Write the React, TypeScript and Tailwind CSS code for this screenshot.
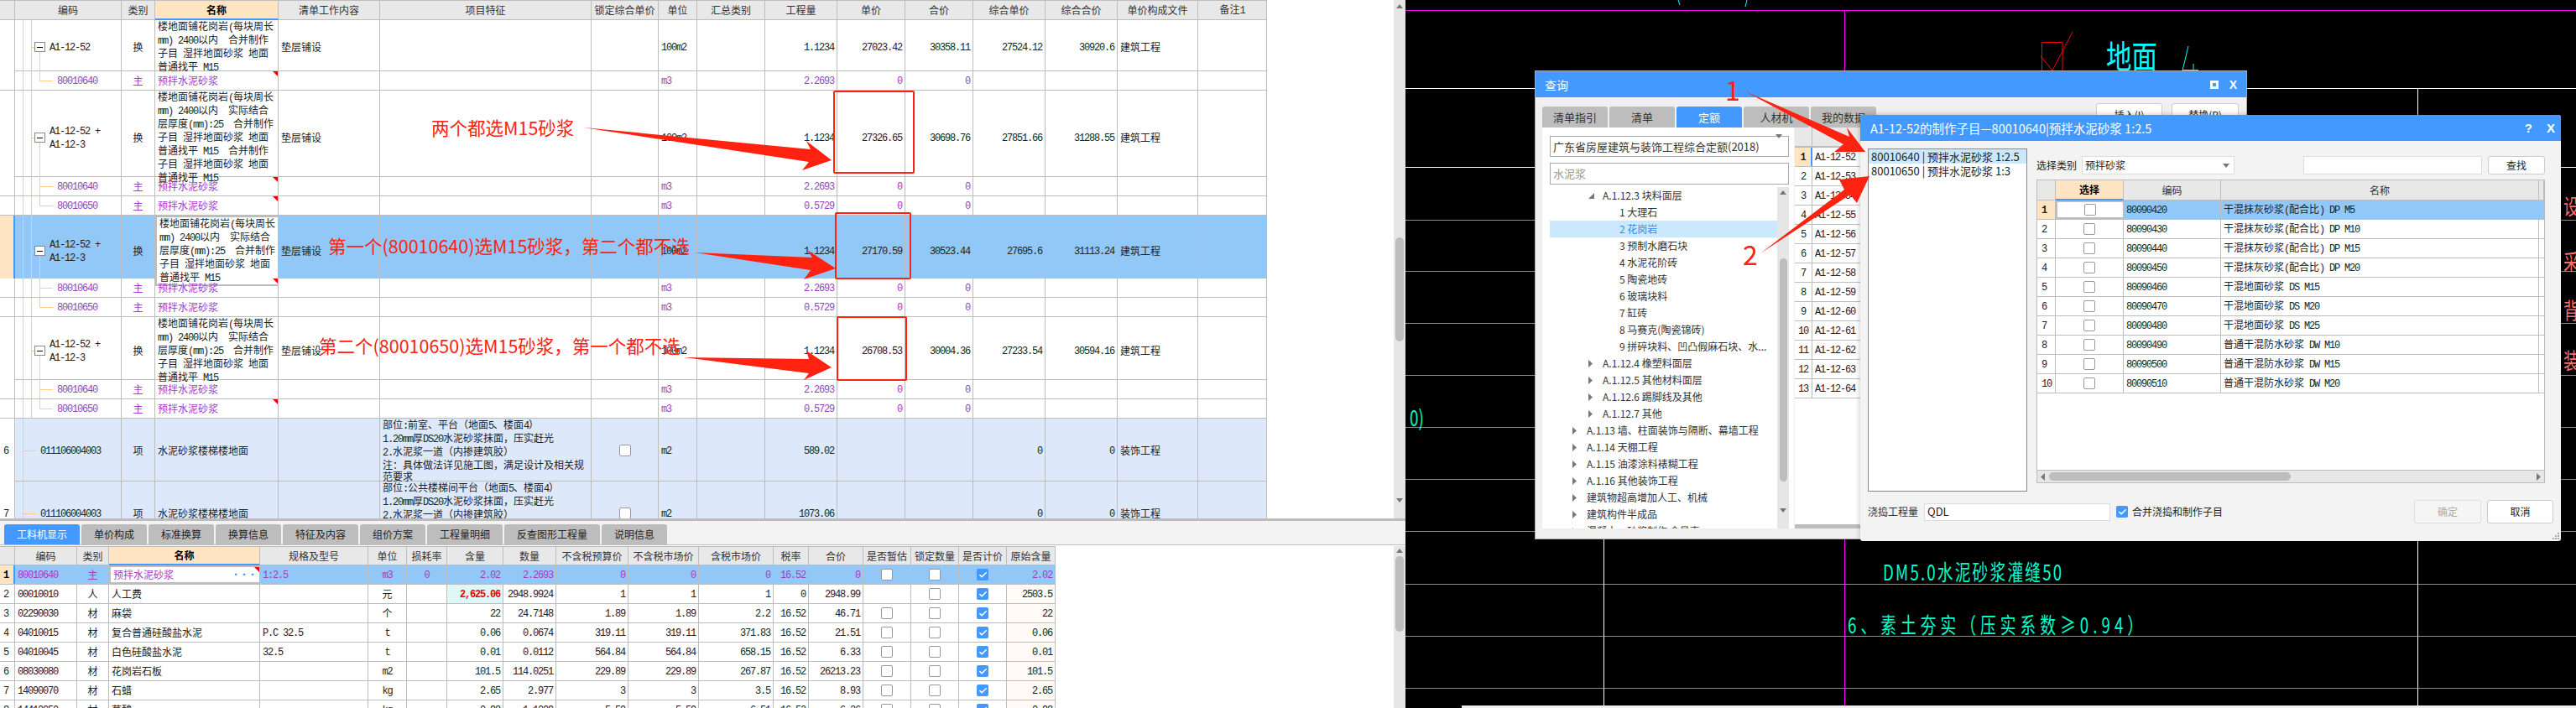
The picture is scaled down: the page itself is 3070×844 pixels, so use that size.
import React from "react";
import clsx from "clsx";
import { Check } from "lucide-react";

const LINE = "border-[#bdbdbd]";
const PURPLE = "text-[#a33cc4]";

// ascii runs get a half-width mono face so they sit like the old bitmap font
const Sim = ({ text }: { text: string }) => (
  <span>
    {text.split(/([\x20-\x7e]+)/).map((p, i) =>
      i % 2 ? (
        <span key={i} className="font-['Liberation_Mono',monospace] tracking-[-1.2px]">
          {p}
        </span>
      ) : (
        p
      )
    )}
  </span>
);

const Box = ({ checked }: { checked?: boolean }) =>
  checked ? (
    <span className="flex items-center justify-center w-[14px] h-[14px] rounded-[2px] bg-[#4499ff]">
      <Check size={11} strokeWidth={3.5} className="text-white" />
    </span>
  ) : (
    <span className="block w-[14px] h-[14px] rounded-[2px] border border-[#999] bg-white" />
  );

const Tri = () => (
  <span className="absolute top-0 right-0 w-0 h-0 border-t-[6px] border-l-[6px] border-t-[#f00000] border-l-transparent" />
);

const Cell = ({ children, className }: { children?: React.ReactNode; className?: string }) => (
  <div className={clsx("relative flex items-center min-w-0 border-r px-[3px]", LINE, className)}>{children}</div>
);

const HeadCell = ({ children, active, tall }: { children?: React.ReactNode; active?: boolean; tall?: boolean }) => (
  <div
    className={clsx(
      "flex items-center justify-center border-r",
      LINE,
      active ? "bg-[#ffe4c4] font-bold text-black border-b-2 border-b-[#4499ff]" : "bg-[#e8e8e8] text-[#333] border-b",
      tall && "h-full"
    )}
  >
    {children}
  </div>
);

const Up = () => <span className="w-0 h-0 border-x-[4px] border-b-[5px] border-x-transparent border-b-[#777]" />;
const Down = () => <span className="w-0 h-0 border-x-[4px] border-t-[5px] border-x-transparent border-t-[#777]" />;

/* ---------- top grid ---------- */

const TOP_COLS = "grid grid-cols-[18px_127px_40px_147px_121px_252px_80px_46px_81px_86px_81px_81px_86px_86px_96px_82px]";

type TopRow = {
  kind: "item" | "sub" | "section";
  h: string;
  no?: string;
  code: string[];
  name: string[];
  feature?: string[];
  qty: string;
  nums: string[];
  tri?: boolean;
  last?: boolean;
  sel?: boolean;
};

const N4 = ["楼地面铺花岗岩(每块周长", "mm) 2400以内  合并制作", "子目 湿拌地面砂浆 地面", "普通找平 M15"];
const N5 = ["楼地面铺花岗岩(每块周长", "mm) 2400以内  实际结合", "层厚度(mm):25  合并制作", "子目 湿拌地面砂浆 地面", "普通找平 M15"];
const N7 = [...N5, "子目 湿拌地面砂浆 地面", "普通找平 M15"];
N7[4] = "普通找平 M15  合并制作";
const MIX = ["预拌水泥砂浆"];

const topRows: TopRow[] = [
  { kind: "item", h: "h-[61px]", code: ["A1-12-52"], name: N4, qty: "1.1234", nums: ["27023.42", "30358.11", "27524.12", "30920.6"] },
  { kind: "sub", h: "h-[23px]", code: ["80010640"], name: MIX, qty: "2.2693", nums: ["0", "0"], tri: true, last: true },
  { kind: "item", h: "h-[103px]", code: ["A1-12-52 +", "A1-12-3"], name: N7, qty: "1.1234", nums: ["27326.65", "30698.76", "27851.66", "31288.55"] },
  { kind: "sub", h: "h-[23px]", code: ["80010640"], name: MIX, qty: "2.2693", nums: ["0", "0"], tri: true },
  { kind: "sub", h: "h-[23px]", code: ["80010650"], name: MIX, qty: "0.5729", nums: ["0", "0"], tri: true, last: true },
  { kind: "item", h: "h-[75px]", sel: true, code: ["A1-12-52 +", "A1-12-3"], name: N5, qty: "1.1234", nums: ["27170.59", "30523.44", "27695.6", "31113.24"] },
  { kind: "sub", h: "h-[23px]", code: ["80010640"], name: MIX, qty: "2.2693", nums: ["0", "0"], tri: true },
  { kind: "sub", h: "h-[23px]", code: ["80010650"], name: MIX, qty: "0.5729", nums: ["0", "0"], last: true },
  { kind: "item", h: "h-[75px]", code: ["A1-12-52 +", "A1-12-3"], name: N5, qty: "1.1234", nums: ["26708.53", "30004.36", "27233.54", "30594.16"] },
  { kind: "sub", h: "h-[23px]", code: ["80010640"], name: MIX, qty: "2.2693", nums: ["0", "0"] },
  { kind: "sub", h: "h-[23px]", code: ["80010650"], name: MIX, qty: "0.5729", nums: ["0", "0"], tri: true, last: true },
  {
    kind: "section",
    h: "h-[75px]",
    no: "6",
    code: ["011106004003"],
    name: ["水泥砂浆楼梯楼地面"],
    feature: ["部位:前室、平台（地面5、楼面4）", "1.20mm厚DS20水泥砂浆抹面，压实赶光", "2.水泥浆一道（内掺建筑胶）", "注：具体做法详见施工图，满足设计及相关规", "范要求"],
    qty: "589.02",
    nums: ["", "", "0", "0"],
  },
  {
    kind: "section",
    h: "h-[75px]",
    no: "7",
    code: ["011106004003"],
    name: ["水泥砂浆楼梯楼地面"],
    feature: ["部位:公共楼梯间平台（地面5、楼面4）", "1.20mm厚DS20水泥砂浆抹面，压实赶光", "2.水泥浆一道（内掺建筑胶）", "注：具体做法详见施工图，满足设计及相关规", "范要求"],
    qty: "1073.06",
    nums: ["", "", "0", "0"],
  },
];

const Lines = ({ lines }: { lines: string[] }) => (
  <div>
    {lines.map((l, i) => (
      <div key={i}>
        <Sim text={l} />
      </div>
    ))}
  </div>
);

const CodeCell = ({ row }: { row: TopRow }) => {
  const guide = "absolute bg-[#ffcc80]";
  return (
    <Cell className={clsx(row.kind === "item" && "pl-[41px]", row.kind === "sub" && "pl-[50px]", row.kind === "section" && "pl-[30px]")}>
      <span className={clsx(guide, "left-[9px] top-0 bottom-0 w-px")} />
      {row.kind !== "section" && <span className={clsx(guide, "left-[19px] top-0 bottom-0 w-px")} />}
      {row.kind === "section" && <span className={clsx(guide, "left-[10px] top-1/2 w-[15px] h-px")} />}
      {row.kind === "item" && (
        <>
          <span className={clsx(guide, "left-[29px] top-1/2 bottom-0 w-px")} />
          <span className={clsx(guide, "left-[19px] top-1/2 w-[5px] h-px")} />
          <span className="absolute left-[23px] top-1/2 -translate-y-1/2 flex items-center justify-center w-[13px] h-[12px] bg-white border border-[#888]">
            <span className="w-[7px] h-px bg-black" />
          </span>
        </>
      )}
      {row.kind === "sub" && (
        <>
          <span className={clsx(guide, "left-[29px] top-0 w-px", row.last ? "h-1/2" : "bottom-0")} />
          <span className={clsx(guide, "left-[29px] top-1/2 w-[16px] h-px")} />
        </>
      )}
      <Lines lines={row.code} />
    </Cell>
  );
};

const TopGrid = () => (
  <div className="w-[1510px] shrink-0">
    <div className={clsx(TOP_COLS, "h-[24px] border-t", LINE)}>
      {["", "编码", "类别", "名称", "清单工作内容", "项目特征", "锁定综合单价", "单位", "汇总类别", "工程量", "单价", "合价", "综合单价", "综合合价", "单价构成文件", "备注1"].map((t, i) => (
        <HeadCell key={i} active={t === "名称"}>
          {t === "备注1" ? <Sim text={t} /> : t}
        </HeadCell>
      ))}
    </div>
    {topRows.map((r, i) => {
      const sub = r.kind === "sub";
      const tone = clsx(sub && PURPLE);
      const bg = r.sel ? "bg-[#92c8f7]" : r.kind === "section" ? "bg-[#dde9fb]" : "bg-white";
      return (
        <div key={i} className={clsx(TOP_COLS, r.h, "border-b", LINE, bg, tone)}>
          <Cell className={clsx("px-[4px]", r.sel ? "bg-[#ffe4c4] border-r-2 border-r-[#4499ff]" : "bg-white")}>
            {r.no && <Sim text={r.no} />}
          </Cell>
          <CodeCell row={r} />
          <Cell className="justify-center">{r.kind === "item" ? "换" : sub ? "主" : "项"}</Cell>
          <Cell className={clsx(r.sel && "bg-white border-2 border-[#777]", "text-[#222]", sub && PURPLE)}>
            <Lines lines={r.name} />
            {r.tri && <Tri />}
          </Cell>
          <Cell>{r.kind === "item" && "垫层铺设"}</Cell>
          <Cell>{r.feature && <Lines lines={r.feature} />}</Cell>
          <Cell className="justify-center">{r.kind === "section" && <Box />}</Cell>
          <Cell>
            <Sim text={r.kind === "item" ? "100m2" : sub ? "m3" : "m2"} />
          </Cell>
          <Cell />
          <Cell className="justify-end">
            <Sim text={r.qty} />
          </Cell>
          {[0, 1, 2, 3].map((n) => (
            <Cell key={n} className="justify-end">
              <Sim text={r.nums[n] ?? ""} />
            </Cell>
          ))}
          <Cell>{!sub && (r.kind === "item" ? "建筑工程" : "装饰工程")}</Cell>
          <Cell />
        </div>
      );
    })}
  </div>
);

/* ---------- bottom grid ---------- */

const BOTTOM_COLS = "grid grid-cols-[18px_74px_38px_180px_129px_46px_48px_67px_63px_86px_84px_89px_42px_65px_57px_57px_57px_58px]";

const labourRows = [
  ["1", "80010640", "主", "预拌水泥砂浆", "1:2.5", "m3", "0", "2.02", "2.2693", "0", "0", "0", "16.52", "0", "2.02"],
  ["2", "00010010", "人", "人工费", "", "元", "", "2,625.06", "2948.9924", "1", "1", "1", "0", "2948.99", "2503.5"],
  ["3", "02290030", "材", "麻袋", "", "个", "", "22", "24.7148", "1.89", "1.89", "2.2", "16.52", "46.71", "22"],
  ["4", "04010015", "材", "复合普通硅酸盐水泥", "P.C 32.5", "t", "", "0.06", "0.0674", "319.11", "319.11", "371.83", "16.52", "21.51", "0.06"],
  ["5", "04010045", "材", "白色硅酸盐水泥", "32.5", "t", "", "0.01", "0.0112", "564.84", "564.84", "658.15", "16.52", "6.33", "0.01"],
  ["6", "08030080", "材", "花岗岩石板", "", "m2", "", "101.5", "114.0251", "229.89", "229.89", "267.87", "16.52", "26213.23", "101.5"],
  ["7", "14090070", "材", "石蜡", "", "kg", "", "2.65", "2.977", "3", "3", "3.5", "16.52", "8.93", "2.65"],
  ["8", "14410050", "材", "草酸", "", "kg", "", "0.98", "1.1009", "5.59", "5.59", "6.51", "16.52", "6.26", "0.98"],
];

const BottomGrid = () => (
  <div className="w-[1258px] shrink-0">
    <div className={clsx(BOTTOM_COLS, "h-[23px] border-t", LINE)}>
      {["", "编码", "类别", "名称", "规格及型号", "单位", "损耗率", "含量", "数量", "不含税预算价", "不含税市场价", "含税市场价", "税率", "合价", "是否暂估", "锁定数量", "是否计价", "原始含量"].map((t, i) => (
        <HeadCell key={i} active={t === "名称"}>
          {t}
        </HeadCell>
      ))}
    </div>
    {labourRows.map((r, i) => {
      const sel = i === 0;
      return (
        <div key={i} className={clsx(BOTTOM_COLS, "h-[23px] border-b", LINE, sel ? clsx("bg-[#92c8f7]", PURPLE) : "bg-white")}>
          <Cell className={clsx("px-[4px]", sel ? "bg-[#ffe4c4] border-r-2 border-r-[#4499ff] font-bold text-black" : "")}>
            <Sim text={r[0]} />
          </Cell>
          <Cell>
            <Sim text={r[1]} />
          </Cell>
          <Cell className="justify-center">{r[2]}</Cell>
          <Cell className={clsx(sel && "bg-white border-2 border-[#777] justify-between")}>
            {r[3]}
            {sel && <span className="font-bold text-[#4499ff] text-[10px]">···</span>}
            {sel && <Tri />}
          </Cell>
          <Cell>
            <Sim text={r[4]} />
          </Cell>
          <Cell className="justify-center">
            <Sim text={r[5]} />
          </Cell>
          <Cell className="justify-center">
            <Sim text={r[6]} />
          </Cell>
          {i === 1 ? (
            <Cell className="justify-end bg-[#dff7f7] font-bold text-[#f00000]">
              <Sim text={r[7]} />
            </Cell>
          ) : (
            <Cell className="justify-end">
              <Sim text={r[7]} />
            </Cell>
          )}
          {[8, 9, 10, 11, 12, 13].map((n) => (
            <Cell key={n} className="justify-end">
              <Sim text={r[n]} />
            </Cell>
          ))}
          <Cell className="justify-center">{i !== 1 && <Box />}</Cell>
          <Cell className="justify-center">
            <Box />
          </Cell>
          <Cell className="justify-center">
            <Box checked />
          </Cell>
          <Cell className={clsx("justify-end", !sel && "bg-[#fffaf5]")}>
            <Sim text={r[14]} />
          </Cell>
        </div>
      );
    })}
  </div>
);

const bottomTabs = [
  ["工料机显示", "w-[90px] bg-[#4499ff] text-white"],
  ["单价构成", "w-[78px] bg-[#bdbdbd]"],
  ["标准换算", "w-[78px] bg-[#bdbdbd]"],
  ["换算信息", "w-[78px] bg-[#bdbdbd]"],
  ["特征及内容", "w-[90px] bg-[#bdbdbd]"],
  ["组价方案", "w-[78px] bg-[#bdbdbd]"],
  ["工程量明细", "w-[90px] bg-[#bdbdbd]"],
  ["反查图形工程量", "w-[114px] bg-[#bdbdbd]"],
  ["说明信息", "w-[78px] bg-[#bdbdbd]"],
];

const LeftApp = () => (
  <div className="flex flex-col w-[1675px] h-[844px] shrink-0 bg-white">
    <div className="flex h-[618px] overflow-hidden">
      <TopGrid />
      <div className="flex-1" />
      <div className="flex flex-col items-center w-[14px] bg-[#e6e6e6] pt-[5px] pb-[3px]">
        <Up />
        <span className="w-[10px] h-[124px] mt-[273px] rounded-full bg-[#bdbdbd]" />
        <span className="mt-auto">
          <Down />
        </span>
      </div>
    </div>
    <div className="h-[3px] bg-[#bdbdbd]" />
    <div className={clsx("flex items-end gap-[2px] h-[29px] pl-[5px] bg-[#f3f3f3] border-b", LINE)}>
      {bottomTabs.map(([t, c]) => (
        <div key={t} className={clsx("flex items-center justify-center h-[24px] rounded-t-[3px]", c)}>
          {t}
        </div>
      ))}
    </div>
    <div className="flex flex-1 min-h-0 pt-px overflow-hidden">
      <BottomGrid />
      <div className="flex-1" />
      <div className="flex flex-col items-center w-[14px] bg-[#e6e6e6] pt-[3px]">
        <Up />
        <span className="w-[10px] h-[90px] mt-[4px] rounded-full bg-[#bdbdbd]" />
      </div>
    </div>
  </div>
);

/* ---------- query dialog ---------- */

const RightArrow = () => (
  <svg width="5" height="9" viewBox="0 0 5 9">
    <polygon points="0,0 5,4.5 0,9" fill="#777" />
  </svg>
);

const OpenArrow = () => (
  <svg width="7" height="7" viewBox="0 0 7 7">
    <polygon points="7,0 7,7 0,7" fill="#777" />
  </svg>
);

const tree: [string, number, "open" | "closed" | "none"][] = [
  ["A.1.12.3 块料面层", 2, "open"],
  ["1 大理石", 3, "none"],
  ["2 花岗岩", 3, "none"],
  ["3 预制水磨石块", 3, "none"],
  ["4 水泥花阶砖", 3, "none"],
  ["5 陶瓷地砖", 3, "none"],
  ["6 玻璃块料", 3, "none"],
  ["7 缸砖", 3, "none"],
  ["8 马赛克(陶瓷锦砖)", 3, "none"],
  ["9 拼碎块料、凹凸假麻石块、水...", 3, "none"],
  ["A.1.12.4 橡塑料面层", 2, "closed"],
  ["A.1.12.5 其他材料面层", 2, "closed"],
  ["A.1.12.6 踢脚线及其他", 2, "closed"],
  ["A.1.12.7 其他", 2, "closed"],
  ["A.1.13 墙、柱面装饰与隔断、幕墙工程", 1, "closed"],
  ["A.1.14 天棚工程", 1, "closed"],
  ["A.1.15 油漆涂料裱糊工程", 1, "closed"],
  ["A.1.16 其他装饰工程", 1, "closed"],
  ["建筑物超高增加人工、机械", 1, "closed"],
  ["建筑构件半成品", 1, "closed"],
  ["混凝土、砂浆制作 含量表", 1, "closed"],
];

const TreeRow = ({ text, level, icon }: { text: string; level: number; icon: string }) => {
  const selected = text === "2 花岗岩";
  return (
    <div
      className={clsx(
        "flex items-center h-[20px] shrink-0 text-[#333]",
        level === 1 && "pl-[27px]",
        level === 2 && "pl-[46px]",
        level === 3 && "pl-[83px]",
        selected && "bg-[#cce8ff] text-[#3388e8]"
      )}
    >
      {icon !== "none" && <span className="flex w-[17px]">{icon === "open" ? <OpenArrow /> : <RightArrow />}</span>}
      {text}
    </div>
  );
};

const QueryDialog = () => (
  <div className="absolute left-[154px] top-[84px] flex flex-col w-[849px] h-[559px] bg-[#f0f0f0] border border-[#aaa]">
    <div className="flex items-center justify-between h-[31px] shrink-0 pl-[11px] pr-[11px] bg-[#4499ff] text-white text-[14px]">
      查询
      <span className="flex items-center gap-[13px]">
        <span className="w-[10px] h-[10px] border-[3px] border-white" />
        <span className="font-['Liberation_Sans',sans-serif] font-bold text-[14px]">X</span>
      </span>
    </div>
    <div className="flex items-end h-[36px] shrink-0 pl-[8px] pr-[9px]">
      <div className="flex gap-[2px]">
        {["清单指引", "清单", "定额", "人材机", "我的数据"].map((t) => (
          <div
            key={t}
            className={clsx(
              "flex items-center justify-center w-[78px] h-[25px] rounded-t-[3px] text-[13px]",
              t === "定额" ? "bg-[#4499ff] text-white" : "bg-[#bdbdbd] text-[#333]"
            )}
          >
            {t}
          </div>
        ))}
      </div>
      <div className="flex gap-[11px] ml-auto self-start mt-[7px]">
        <div className="flex items-center justify-center w-[79px] h-[28px] rounded-[3px] border border-[#ccc] bg-white">插入(I)</div>
        <div className="flex items-center justify-center w-[80px] h-[28px] rounded-[3px] border border-[#ccc] bg-white">替换(R)</div>
      </div>
    </div>
    <div className="flex gap-px h-[478px] pl-[8px]">
      <div className="flex flex-col w-[300px] pt-[10px] pl-[9px] pr-[6px] bg-white">
        <div className="flex items-center justify-between h-[25px] shrink-0 px-[3px] border border-[#aaa] text-[#333] text-[13px]">
          广东省房屋建筑与装饰工程综合定额(2018)
          <span className="mr-[4px]">
            <Down />
          </span>
        </div>
        <div className="flex items-center h-[26px] shrink-0 mt-[7px] px-[3px] border border-[#aaa] text-[#999] text-[13px]">水泥浆</div>
        <div className="flex flex-1 min-h-0 mt-[3px]">
          <div className="flex flex-col w-[271px] overflow-hidden pt-0">
            {tree.map(([t, l, i]) => (
              <TreeRow key={t} text={t} level={l} icon={i} />
            ))}
          </div>
          <div className="flex flex-col items-center w-[14px] pt-[4px] pb-[3px] bg-[#e6e6e6]">
            <Up />
            <span className="w-[9px] h-[266px] mt-[76px] rounded-full bg-[#bdbdbd]" />
            <span className="mt-auto">
              <Down />
            </span>
          </div>
        </div>
      </div>
      <div className="flex flex-col w-[529px] bg-white">
        <div className={clsx("grid grid-cols-[21px_1fr] h-[24px] shrink-0 border-b", LINE)}>
          <HeadCell />
          <HeadCell>编码</HeadCell>
        </div>
        {Array.from({ length: 13 }, (_, i) => (
          <div key={i} className={clsx("grid grid-cols-[21px_1fr] h-[23px] shrink-0 border-b", LINE)}>
            <Cell className={clsx("justify-center px-0", i === 0 && "bg-[#ffe4c4] border-r-2 border-r-[#4499ff] font-bold")}>
              <Sim text={String(i + 1)} />
            </Cell>
            <Cell>
              <Sim text={`A1-12-${52 + i}`} />
            </Cell>
          </div>
        ))}
        <div className="h-[5px] mt-auto bg-[#bdbdbd]" />
      </div>
    </div>
  </div>
);

/* ---------- sub-item dialog ---------- */

const mortars = [
  ["80090420", "干混抹灰砂浆(配合比) DP M5"],
  ["80090430", "干混抹灰砂浆(配合比) DP M10"],
  ["80090440", "干混抹灰砂浆(配合比) DP M15"],
  ["80090450", "干混抹灰砂浆(配合比) DP M20"],
  ["80090460", "干混地面砂浆 DS M15"],
  ["80090470", "干混地面砂浆 DS M20"],
  ["80090480", "干混地面砂浆 DS M25"],
  ["80090490", "普通干混防水砂浆 DW M10"],
  ["80090500", "普通干混防水砂浆 DW M15"],
  ["80090510", "普通干混防水砂浆 DW M20"],
];

const MORTAR_COLS = "grid grid-cols-[22px_81px_116px_379px_1fr]";

const SubDialog = () => (
  <div className="absolute left-[542px] top-[137px] flex flex-col w-[835px] h-[508px] rounded-[3px] bg-[#f3f3f3] shadow-[0_0_6px_rgba(0,0,0,0.25)]">
    <div className="flex items-center justify-between h-[31px] shrink-0 pl-[12px] pr-[7px] rounded-t-[3px] bg-[#4499ff] text-white text-[14.5px]">
      A1-12-52的制作子目—80010640|预拌水泥砂浆 1:2.5
      <span className="flex items-center gap-[17px] font-['Liberation_Sans',sans-serif] font-bold text-[15px]">
        <span>?</span>
        <span>X</span>
      </span>
    </div>
    <div className="flex h-[418px] shrink-0 pl-[9px] pt-[9px]">
      <div className="w-[190px] h-[409px] shrink-0 bg-white border border-[#888] text-[13px] leading-[17px] text-[#222]">
        <div className="bg-[#cce8ff] h-[17px] pl-[3px]">80010640 | 预拌水泥砂浆 1:2.5</div>
        <div className="pl-[3px]">80010650 | 预拌水泥砂浆 1:3</div>
      </div>
      <div className="flex flex-col w-[606px] ml-[11px] pt-[9px]">
        <div className="flex items-center h-[22px] shrink-0">
          <span className="w-[54px]">选择类别</span>
          <div className="flex items-center justify-between w-[182px] h-[22px] pl-[3px] pr-[5px] bg-white border border-[#ddd]">
            预拌砂浆
            <Down />
          </div>
          <div className="w-[213px] h-[22px] ml-auto bg-white border border-[#ddd]" />
          <div className="flex items-center justify-center w-[68px] h-[22px] ml-[7px] rounded-[3px] bg-white border border-[#ccc]">查找</div>
        </div>
        <div className={clsx("flex flex-col h-[362px] mt-[6px] bg-white border", LINE)}>
          <div className={clsx(MORTAR_COLS, "h-[24px] shrink-0")}>
            <HeadCell />
            <HeadCell active>选择</HeadCell>
            <HeadCell>编码</HeadCell>
            <HeadCell>名称</HeadCell>
            <HeadCell />
          </div>
          {mortars.map(([code, name], i) => (
            <div key={code} className={clsx(MORTAR_COLS, "h-[23px] shrink-0 border-b", LINE, i === 0 && "bg-[#92c8f7]")}>
              <Cell className={clsx("px-[5px]", i === 0 && "bg-[#ffe4c4] font-bold")}>
                <Sim text={String(i + 1)} />
              </Cell>
              <Cell className={clsx("justify-center", i === 0 && "bg-white border-2 border-[#4499ff]")}>
                <Box />
              </Cell>
              <Cell>
                <Sim text={code} />
              </Cell>
              <Cell>
                <Sim text={name} />
              </Cell>
              <Cell />
            </div>
          ))}
          <div className={clsx("flex items-center h-[15px] mt-auto bg-[#e6e6e6] border-t", LINE)}>
            <span className="w-[13px] pl-[4px]">
              <svg width="5" height="9" viewBox="0 0 5 9">
                <polygon points="5,0 0,4.5 5,9" fill="#777" />
              </svg>
            </span>
            <span className="w-[288px] h-[10px] ml-px rounded-full bg-[#bdbdbd]" />
            <span className="ml-auto mr-[4px] flex">
              <RightArrow />
            </span>
          </div>
        </div>
      </div>
    </div>
    <div className="flex items-center h-[28px] mt-[10px] pl-[9px] pr-[9px]">
      <span className="w-[67px] text-[#333]">浇捣工程量</span>
      <div className="flex items-center w-[222px] h-[21px] pl-[3px] bg-white border border-[#ddd] text-[13px]">QDL</div>
      <span className="ml-[7px]">
        <Box checked />
      </span>
      <span className="ml-[5px]">合并浇捣和制作子目</span>
      <div className="flex items-center justify-center w-[80px] h-[28px] ml-auto rounded-[3px] bg-[#f5f5f5] border border-[#ddd] text-[#aaa]">确定</div>
      <div className="flex items-center justify-center w-[79px] h-[28px] ml-[7px] rounded-[3px] bg-white border border-[#ccc]">取消</div>
    </div>
    <svg className="absolute right-[2px] bottom-[2px]" width="8" height="8" viewBox="0 0 8 8">
      <g fill="#aaa">
        <rect x="6" y="0" width="2" height="2" />
        <rect x="3" y="3" width="2" height="2" />
        <rect x="6" y="3" width="2" height="2" />
        <rect x="0" y="6" width="2" height="2" />
        <rect x="3" y="6" width="2" height="2" />
        <rect x="6" y="6" width="2" height="2" />
      </g>
    </svg>
  </div>
);

/* ---------- cad background ---------- */

const grayLines = [262, 323, 385, 447, 509, 571, 633, 696, 758, 820];

const CadLines = () => (
  <svg className="absolute inset-0" width="1395" height="844" viewBox="1675 0 1395 844">
    {grayLines.map((y) => (
      <line key={y} x1="1675" x2="3070" y1={y + 0.5} y2={y + 0.5} stroke="#8a8a8a" />
    ))}
    <line x1="1675" x2="3070" y1="105.5" y2="105.5" stroke="#fff" />
    <line x1="1675" x2="3070" y1="199.5" y2="199.5" stroke="#fff" />
    <line x1="1911.5" x2="1911.5" y1="105" y2="841" stroke="#fff" />
    <line x1="2881.5" x2="2881.5" y1="105" y2="841" stroke="#fff" />
    <line x1="1675" x2="3070" y1="12.5" y2="12.5" stroke="#ff00ff" />
    <line x1="2198.5" x2="2198.5" y1="12" y2="844" stroke="#ff00ff" />
    <path d="M2000 0l2 6M2080 8l2-8" stroke="#00ffff" fill="none" />
    <path d="M2433.5 84V50.5H2458V84M2432 67l14 17 24-46" stroke="#ff0000" fill="none" />
    <path d="M2608 55l-7 29M2601 83.500h19M2614 76v8" stroke="#00ffff" fill="none" />
    <rect x="1742" y="841" width="1328" height="3" fill="#f0f0f0" />
  </svg>
);

const CadText = ({ children, className }: { children: React.ReactNode; className: string }) => (
  <span className={clsx("absolute origin-left scale-x-[0.72] leading-none text-[26px]", className)}>{children}</span>
);

const CadArea = () => (
  <div className="relative flex-1 h-[844px] bg-black overflow-hidden">
    <CadLines />
    <span className="absolute left-[835px] top-[46px] origin-left scale-x-[0.8] text-[38px] leading-none text-[#00ffff]">地面</span>
    <CadText className="left-[5px] top-[484px] text-[#00ffc8]">0)</CadText>
    <CadText className="left-[569px] top-[668px] text-[#00ffc8] tracking-[3px]">DM5.0水泥砂浆灌缝50</CadText>
    <CadText className="left-[527px] top-[731px] text-[#00ffc8] tracking-[7px]">6、素土夯实（压实系数≥0.94）</CadText>
    <CadText className="left-[1380px] top-[232px] text-[#ff6e6e]">设</CadText>
    <CadText className="left-[1380px] top-[298px] text-[#ff6e6e]">采</CadText>
    <CadText className="left-[1380px] top-[356px] text-[#ff6e6e]">背</CadText>
    <CadText className="left-[1380px] top-[416px] text-[#ff6e6e]">装</CadText>
    <QueryDialog />
    <SubDialog />
  </div>
);

/* ---------- red markup on top of everything ---------- */

const Note = ({ children, className }: { children: React.ReactNode; className: string }) => (
  <span className={clsx("absolute text-[#ff2211] text-[21.5px] leading-none", className)}>{children}</span>
);

const Markup = () => (
  <>
    <svg className="absolute inset-0 pointer-events-none" width="3070" height="844" viewBox="0 0 3070 844">
      <g fill="none" stroke="#ff2211" strokeWidth="2">
        <rect x="994" y="109" width="95" height="97" rx="1" />
        <rect x="996" y="254" width="89" height="78" rx="1" />
        <rect x="998" y="378" width="82" height="75" rx="1" />
      </g>
      <g fill="#ff2211">
        <polygon points="695,152 966,178 961,168 991,191 956,203 964,193" />
        <polygon points="828,301 968,307 962,298 996,320 958,333 966,322" />
        <polygon points="815,426 964,428 961,418 991,438 958,453 964,445" />
        <polygon points="2080,109 2204,163 2201,152 2223,181 2186,181 2197,172" />
        <polygon points="2098,302 2198,226 2192,214 2228,210 2213,242 2205,232" />
      </g>
    </svg>
    <Note className="left-[514px] top-[141px]">两个都选M15砂浆</Note>
    <Note className="left-[391px] top-[282px]">第一个(80010640)选M15砂浆，第二个都不选</Note>
    <Note className="left-[380px] top-[401px]">第二个(80010650)选M15砂浆，第一个都不选</Note>
    <Note className="left-[2056px] top-[90px] text-[32px]!">1</Note>
    <Note className="left-[2077px] top-[286px] text-[32px]!">2</Note>
  </>
);

export default function App() {
  return (
    <div className="relative flex w-[3070px] h-[844px] overflow-hidden whitespace-pre text-[12px] leading-[14px] text-[#222] font-['Noto_Sans_CJK_SC',sans-serif]">
      <LeftApp />
      <CadArea />
      <Markup />
    </div>
  );
}
